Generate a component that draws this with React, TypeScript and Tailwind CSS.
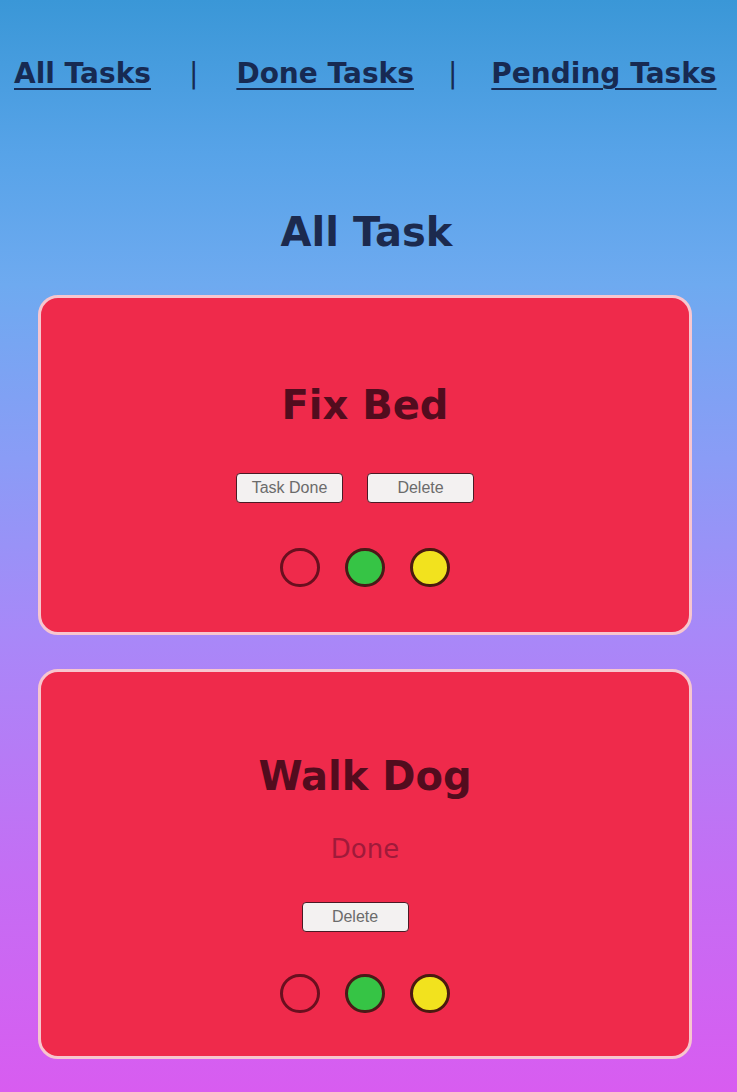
import React from "react";

const Circles = () => (
  <div className="flex items-center gap-[25px]">
    <div className="w-[40px] h-[39px] rounded-full border-[3px] border-[#6a0f1f]" />
    <div className="w-[40px] h-[39px] rounded-full border-[3px] border-[#4a1a18] bg-[#36c445]" />
    <div className="w-[40px] h-[39px] rounded-full border-[3px] border-[#4a1a10] bg-[#f2e21e]" />
  </div>
);

const Btn = ({ children }: { children: React.ReactNode }) => (
  <button className="h-[30px] w-[107px] bg-[#f3f1f1] border border-[#4a1a25] rounded-[4px] text-[16px] text-[#6b6b6b] font-['Liberation_Sans',Arial,sans-serif] leading-none">
    {children}
  </button>
);

export default function App() {
  return (
    <div className="min-h-[1092px] w-full bg-[linear-gradient(180deg,#3a97d7_0%,#57a3e8_14%,#6eaaf0_26%,#8a9cf6_42%,#a888f8_58%,#c46ef4_80%,#d85cf0_100%)] font-['DejaVu_Sans',Verdana,sans-serif] overflow-hidden">
      <nav className="flex items-center pt-[57px] pl-[14px] text-[28px] font-bold text-[#172a52] leading-[1.2]">
        <a className="underline underline-offset-[5px] decoration-[2px]" href="#">All Tasks</a>
        <span className="mx-[38px] font-normal">|</span>
        <a className="underline underline-offset-[5px] decoration-[2px]" href="#">Done Tasks</a>
        <span className="mx-[34px] font-normal">|</span>
        <a className="underline underline-offset-[5px] decoration-[2px] whitespace-nowrap" href="#">Pending Tasks</a>
      </nav>
      <h1 className="mt-[117px] text-center text-[40px] font-bold leading-[1.2] text-[#1c2a4e] pr-[4px]">All Task</h1>
      <div className="mt-[39px] ml-[38px] w-[654px] flex flex-col gap-[34px]">
        <div className="rounded-[20px] border-[3px] border-[#f7c6cf] bg-[#ef2a4b] flex flex-col items-center pt-[83px] pb-[45px]">
          <h2 className="text-[40px] font-bold leading-[1.2] text-[#520c1e]">Fix Bed</h2>
          <div className="mt-[44px] flex gap-[24px] mr-[20px]">
            <Btn>Task Done</Btn>
            <Btn>Delete</Btn>
          </div>
          <div className="mt-[45px]">
            <Circles />
          </div>
        </div>
        <div className="rounded-[20px] border-[3px] border-[#f7c6cf] bg-[#ef2a4b] flex flex-col items-center pt-[80px] pb-[43px]">
          <h2 className="text-[40px] font-bold leading-[1.2] text-[#520c1e]">Walk Dog</h2>
          <p className="mt-[34px] text-[26px] leading-[1.2] text-[#a01a3a]">Done</p>
          <div className="mt-[37px] mr-[20px]">
            <Btn>Delete</Btn>
          </div>
          <div className="mt-[42px]">
            <Circles />
          </div>
        </div>
      </div>
    </div>
  );
}
